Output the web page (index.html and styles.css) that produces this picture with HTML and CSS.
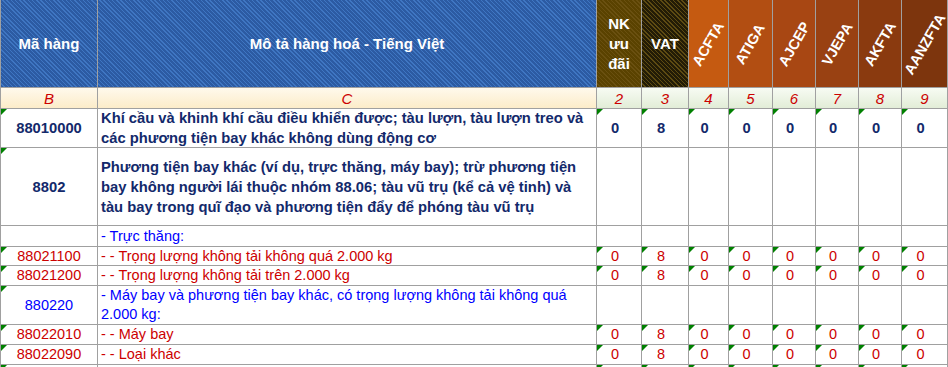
FILE: index.html
```html
<!DOCTYPE html>
<html lang="vi">
<head>
<meta charset="utf-8">
<title>Biểu thuế</title>
<link rel="stylesheet" href="styles.css">
</head>
<body>
<div class="sheet">
  <div class="h h-blue">Mã hàng</div>
  <div class="h h-blue">Mô tả hàng hoá - Tiếng Việt</div>
  <div class="h h-nk">NK<br>ưu<br>đãi</div>
  <div class="h h-vat">VAT</div>
  <div class="h h-o1"><span class="rot">ACFTA</span></div>
  <div class="h h-o2"><span class="rot">ATIGA</span></div>
  <div class="h h-o3"><span class="rot">AJCEP</span></div>
  <div class="h h-o4"><span class="rot">VJEPA</span></div>
  <div class="h h-o5"><span class="rot">AKFTA</span></div>
  <div class="h h-o6"><span class="rot">AANZFTA</span></div>
  <div class="h h-o7"></div>

  <div class="l l-cream">B</div>
  <div class="l l-cream">C</div>
  <div class="l l-green">2</div>
  <div class="l l-green">3</div>
  <div class="l l-green">4</div>
  <div class="l l-green">5</div>
  <div class="l l-green">6</div>
  <div class="l l-green">7</div>
  <div class="l l-green">8</div>
  <div class="l l-green">9</div>
  <div class="l l-green"></div>

  <div class="c code bold tri">88010000</div>
  <div class="c desc bold">Khí cầu và khinh khí cầu điều khiển được; tàu lượn, tàu lượn treo và<br>các phương tiện bay khác không dùng động cơ</div>
  <div class="c num bold tri">0</div>
  <div class="c num bold tri">8</div>
  <div class="c num bold tri">0</div>
  <div class="c num bold tri">0</div>
  <div class="c num bold tri">0</div>
  <div class="c num bold tri">0</div>
  <div class="c num bold tri">0</div>
  <div class="c num bold tri">0</div>
  <div class="c num bold tri"></div>

  <div class="c code bold tri">8802</div>
  <div class="c desc bold">Phương tiện bay khác (ví dụ, trực thăng, máy bay); trừ phương tiện<br>bay không người lái thuộc nhóm 88.06; tàu vũ trụ (kể cả vệ tinh) và<br>tàu bay trong quĩ đạo và phương tiện đẩy để phóng tàu vũ trụ</div>
  <div class="c num"></div>
  <div class="c num"></div>
  <div class="c num"></div>
  <div class="c num"></div>
  <div class="c num"></div>
  <div class="c num"></div>
  <div class="c num"></div>
  <div class="c num"></div>
  <div class="c num"></div>

  <div class="c code blue"></div>
  <div class="c desc blue">- Trực thăng:</div>
  <div class="c num"></div>
  <div class="c num"></div>
  <div class="c num"></div>
  <div class="c num"></div>
  <div class="c num"></div>
  <div class="c num"></div>
  <div class="c num"></div>
  <div class="c num"></div>
  <div class="c num"></div>

  <div class="c code red tri">88021100</div>
  <div class="c desc red">- - Trọng lượng không tải không quá 2.000 kg</div>
  <div class="c num red tri">0</div>
  <div class="c num red tri">8</div>
  <div class="c num red tri">0</div>
  <div class="c num red tri">0</div>
  <div class="c num red tri">0</div>
  <div class="c num red tri">0</div>
  <div class="c num red tri">0</div>
  <div class="c num red tri">0</div>
  <div class="c num red tri"></div>

  <div class="c code red tri">88021200</div>
  <div class="c desc red">- - Trọng lượng không tải trên 2.000 kg</div>
  <div class="c num red tri">0</div>
  <div class="c num red tri">8</div>
  <div class="c num red tri">0</div>
  <div class="c num red tri">0</div>
  <div class="c num red tri">0</div>
  <div class="c num red tri">0</div>
  <div class="c num red tri">0</div>
  <div class="c num red tri">0</div>
  <div class="c num red tri"></div>

  <div class="c code blue tri">880220</div>
  <div class="c desc blue">- Máy bay và phương tiện bay khác, có trọng lượng không tải không quá<br>2.000 kg:</div>
  <div class="c num"></div>
  <div class="c num"></div>
  <div class="c num"></div>
  <div class="c num"></div>
  <div class="c num"></div>
  <div class="c num"></div>
  <div class="c num"></div>
  <div class="c num"></div>
  <div class="c num"></div>

  <div class="c code red tri">88022010</div>
  <div class="c desc red">- - Máy bay</div>
  <div class="c num red tri">0</div>
  <div class="c num red tri">8</div>
  <div class="c num red tri">0</div>
  <div class="c num red tri">0</div>
  <div class="c num red tri">0</div>
  <div class="c num red tri">0</div>
  <div class="c num red tri">0</div>
  <div class="c num red tri">0</div>
  <div class="c num red tri"></div>

  <div class="c code red tri">88022090</div>
  <div class="c desc red">- - Loại khác</div>
  <div class="c num red tri">0</div>
  <div class="c num red tri">8</div>
  <div class="c num red tri">0</div>
  <div class="c num red tri">0</div>
  <div class="c num red tri">0</div>
  <div class="c num red tri">0</div>
  <div class="c num red tri">0</div>
  <div class="c num red tri">0</div>
  <div class="c num red tri"></div>

  <div class="c code tri"></div>
  <div class="c desc"></div>
  <div class="c num tri"></div>
  <div class="c num tri"></div>
  <div class="c num tri"></div>
  <div class="c num tri"></div>
  <div class="c num tri"></div>
  <div class="c num tri"></div>
  <div class="c num tri"></div>
  <div class="c num tri"></div>
  <div class="c num tri"></div>
</div>
</body>
</html>
```

FILE: styles.css
```css
html, body {
  margin: 0;
  padding: 0;
  overflow: hidden;
  background: #ffffff;
}

body {
  width: 948px;
  height: 367px;
  font-family: "Liberation Sans", Arial, sans-serif;
}

.sheet {
  display: grid;
  grid-template-columns: 96px 498px 44px 46px 39px 43px 42px 42px 42px 45px 40px;
  grid-template-rows: 87px 20px 38px 77px 20px 18px 19px 38px 19px 19px 20px;
  gap: 1px;
  padding: 0 0 0 1px;
  background: #a0a0a0;
  width: max-content;
}

/* header */
.h {
  display: flex;
  align-items: center;
  justify-content: center;
  text-align: center;
  color: #ffffff;
  font-weight: bold;
  font-size: 15px;
  line-height: 20px;
}

.h-blue {
  background: repeating-linear-gradient(45deg, #2c5ba3 0 2px, #3f76c2 2px 3px);
}

.h-nk {
  background: repeating-linear-gradient(45deg, #5a4200 0 2px, #6a5010 2px 3px);
}

.h-vat {
  background: repeating-linear-gradient(45deg, #231c06 0 2px, #5e4b12 2px 3px);
}

.h-o1 { background: #c55a11; }
.h-o2 { background: #b24e12; }
.h-o3 { background: #a84713; }
.h-o4 { background: #994112; }
.h-o5 { background: #8a3a0f; }
.h-o6 { background: #7d350d; }
.h-o7 { background: #7d350d; }

.rot {
  display: inline-block;
  white-space: nowrap;
  font-size: 14.5px;
  line-height: 16px;
  transform: rotate(-60deg);
}

/* letter row */
.l {
  display: flex;
  align-items: center;
  justify-content: center;
  color: #cc0000;
  font-style: italic;
  font-size: 15px;
}

.l-cream {
  background: linear-gradient(#fff9ec, #fcecc9);
}

.l-green {
  background: linear-gradient(#f7fbf3, #e2edd7);
}

/* body cells */
.c {
  position: relative;
  display: flex;
  align-items: center;
  background: #ffffff;
  font-size: 14.5px;
  line-height: 19px;
  white-space: nowrap;
  overflow: hidden;
}

.code {
  justify-content: center;
}

.desc {
  padding-left: 3px;
}

.num {
  justify-content: center;
  padding-right: 8px;
}

.bold {
  font-weight: bold;
  font-size: 14.75px;
  line-height: 20px;
  color: #13296b;
}

.red { color: #cc0000; }
.blue { color: #0000ff; }

.tri::before {
  content: "";
  position: absolute;
  left: 0;
  top: 0;
  border-style: solid;
  border-width: 6px 6px 0 0;
  border-color: #008000 transparent transparent transparent;
}
```
